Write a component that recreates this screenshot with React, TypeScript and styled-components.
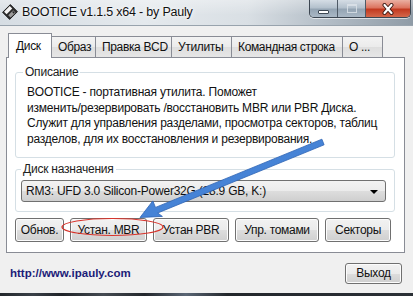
import React from 'react';
import styled, { createGlobalStyle, css } from 'styled-components';

const uiFont = css`
  font-family: "Liberation Sans", Arial, sans-serif;
`;

const uiText = css`
  ${uiFont};
  font-size: 12px;
  letter-spacing: -0.22px;
  color: #111;
  white-space: nowrap;
`;

const Global = createGlobalStyle`
  html, body { margin: 0; padding: 0; background: #f0f0f0; }
  body { font-family: "Liberation Sans", Arial, sans-serif; }
`;

const Window = styled.div`
  ${uiFont};
  position: relative;
  width: 413px;
  height: 296px;
  display: flex;
  flex-direction: column;
  overflow: hidden;
  background: #f0f0f0;
`;

const TitleBar = styled.div`
  height: 25px;
  display: flex;
  align-items: flex-start;
  border-bottom: 1px solid #98a3ad;
  background:
    linear-gradient(to bottom, rgba(255,255,255,0.35), rgba(255,255,255,0) 60%),
    linear-gradient(to right, #d6dde3 0%, #e4e9ed 35%, #d9dfe4 60%, #b5bfc8 78%, #8f9ba6 100%);
`;

const AppIcon = styled.svg`
  width: 16px;
  height: 16px;
  margin: 4px 4px 0 2px;
  flex: none;
`;

const Title = styled.span`
  ${uiFont};
  font-size: 12.5px;
  letter-spacing: -0.2px;
  line-height: 16px;
  margin-top: 4px;
  color: #111;
  text-shadow: 0 0 6px #fff, 0 0 3px #fff;
  white-space: nowrap;
`;

const Spacer = styled.div`
  flex: 1;
`;

const Caption = styled.div`
  display: flex;
  flex: none;
  margin-right: 2px;
  height: 17px;
  border: 1px solid #3c4651;
  border-top: none;
  border-radius: 0 0 5px 5px;
  overflow: hidden;
  box-shadow: 0 1px 0 rgba(255,255,255,0.6);
`;

const CapButton = styled.div<{ $w: number; $kind: 'min' | 'max' | 'close' }>`
  box-sizing: border-box;
  width: ${p => p.$w}px;
  display: flex;
  align-items: center;
  justify-content: center;
  border-left: 1px solid #4f5a66;
  &:first-child { border-left: none; }
  ${p =>
    p.$kind === 'close'
      ? css`
          background: linear-gradient(to bottom, #eab0a2 0%, #dc7560 45%, #c23a20 55%, #d4674a 100%);
        `
      : css`
          background: linear-gradient(to bottom, #d5dde5 0%, #b4c1cd 45%, #94a4b3 55%, #aab8c5 100%);
        `}
`;

const MinGlyph = styled.div`
  width: 9px;
  height: 2px;
  margin-top: 6px;
  background: #fff;
  border: 1px solid #3d4853;
  border-radius: 1px;
`;

const MaxGlyph = styled.div`
  width: 8px;
  height: 6px;
  border: 1px solid #dde4ea;
  border-top-width: 2px;
  opacity: 0.8;
`;

const Client = styled.div`
  flex: 1;
  display: flex;
  flex-direction: column;
  padding: 7px 11px 0 6px;
  background: #f0f0f0;
`;

const TabRow = styled.div`
  display: flex;
  align-items: flex-end;
  height: 24px;
  padding-left: 2px;
  position: relative;
  z-index: 1;
`;

const Tab = styled.div<{ $w: number; $active?: boolean }>`
  ${uiText};
  letter-spacing: -0.35px;
  box-sizing: border-box;
  width: ${p => p.$w}px;
  margin-left: -1px;
  &:first-child { margin-left: 0; }
  border: 1px solid #898c95;
  border-bottom: none;
  ${p =>
    p.$active
      ? css`
          height: 25px;
          margin-bottom: -1px;
          background: #fff;
          padding: 5px 0 0 7px;
          z-index: 2;
        `
      : css`
          height: 21px;
          background: linear-gradient(to bottom, #f3f3f3 0%, #ebebeb 50%, #dedede 51%, #e6e6e6 100%);
          padding: 3px 0 0 6px;
        `}
`;

const Panel = styled.div`
  box-sizing: border-box;
  width: 399px;
  height: 196px;
  border: 1px solid #898c95;
  background: #fff;
  display: flex;
  flex-direction: column;
`;

const Group = styled.fieldset<{ $pad: string; $mt: number }>`
  margin: ${p => p.$mt}px 9px 0 8px;
  padding: ${p => p.$pad};
  border: 1px solid #d5dfe5;
  border-radius: 3px;
  min-width: 0;
`;

const Legend = styled.legend<{ $ml?: number }>`
  ${uiText};
  line-height: 14px;
  padding: 0 2px;
  margin-left: ${p => p.$ml ?? 0}px;
  color: #222;
`;

const Desc = styled.div`
  ${uiText};
  line-height: 15.5px;
`;

const Combo = styled.div`
  ${uiText};
  box-sizing: border-box;
  height: 22px;
  display: flex;
  align-items: center;
  justify-content: space-between;
  padding: 0 7px 0 4px;
  border: 1px solid #707070;
  border-radius: 3px;
  background: linear-gradient(to bottom, #f2f2f2 0%, #ebebeb 50%, #dddddd 51%, #cfcfcf 100%);
`;

const DropArrow = styled.div`
  width: 0;
  height: 0;
  border-left: 4px solid transparent;
  border-right: 4px solid transparent;
  border-top: 4px solid #000;
  margin-top: 2px;
`;

const ButtonRow = styled.div`
  display: flex;
  gap: 6px;
  margin: 6px 0 0 8px;
`;

const Button = styled.div<{ $w: number; $h?: number }>`
  ${uiText};
  letter-spacing: -0.3px;
  box-sizing: border-box;
  width: ${p => p.$w}px;
  height: ${p => p.$h ?? 24}px;
  display: flex;
  align-items: center;
  justify-content: center;
  border: 1px solid #707070;
  border-radius: 3px;
  box-shadow: inset 0 0 0 1px #fcfcfc;
  background: linear-gradient(to bottom, #f2f2f2 0%, #ebebeb 50%, #dddddd 51%, #cfcfcf 100%);
`;

const Footer = styled.div`
  height: 40px;
  display: flex;
  align-items: center;
  justify-content: space-between;
  padding-left: 4px;
`;

const Link = styled.span`
  ${uiFont};
  font-weight: bold;
  font-size: 11.5px;
  color: #1c1c78;
`;

const BottomFrame = styled.div`
  height: 3px;
  background: linear-gradient(to right, #23272c 0%, #3a4048 8%, #1f2328 15%, #454b52 25%, #23272c 35%, #5a6675 45%, #23272c 55%, #2b3036 100%);
`;

const Overlay = styled.svg`
  position: absolute;
  left: 0;
  top: 0;
  width: 413px;
  height: 296px;
  pointer-events: none;
`;

const tabs: [string, number][] = [
  ['Диск', 44],
  ['Образ', 45],
  ['Правка BCD', 77],
  ['Утилиты', 61],
  ['Командная строка', 112],
  ['О ...', 41],
];

const buttons: [string, number][] = [
  ['Обнов.', 49],
  ['Устан. MBR', 77],
  ['Устан PBR', 76],
  ['Упр. томами', 84],
  ['Секторы', 66],
];

export default function App() {
  return (
    <Window>
      <Global />
      <TitleBar>
        <AppIcon viewBox="0 0 16 16">
          <g transform="rotate(-45 8 8)">
            <rect x="2.5" y="3" width="11" height="10" fill="#2b2b2b" stroke="#111" strokeWidth="0.8" />
            <rect x="4" y="3.6" width="8" height="3.6" fill="#f4f4f4" />
            <rect x="4.5" y="9" width="7" height="3.4" fill="#9a9a9a" />
            <rect x="9.5" y="9.5" width="1.4" height="2.4" fill="#222" />
          </g>
        </AppIcon>
        <Title>BOOTICE v1.1.5 x64 - by Pauly</Title>
        <Spacer />
        <Caption>
          <CapButton $w={27} $kind="min">
            <MinGlyph />
          </CapButton>
          <CapButton $w={28} $kind="max">
            <MaxGlyph />
          </CapButton>
          <CapButton $w={45} $kind="close">
            <svg width="14" height="12" viewBox="0 0 14 12">
              <path d="M3.5 2 L10.5 10 M10.5 2 L3.5 10" stroke="#3a1a14" strokeWidth="4" strokeLinecap="round" />
              <path d="M3.5 2 L10.5 10 M10.5 2 L3.5 10" stroke="#fff" strokeWidth="2.2" strokeLinecap="round" />
            </svg>
          </CapButton>
        </Caption>
      </TitleBar>

      <Client>
        <TabRow>
          {tabs.map(([t, w], i) => (
            <Tab key={t} $w={w} $active={i === 0}>
              {t}
            </Tab>
          ))}
        </TabRow>
        <Panel>
          <Group $mt={7} $pad="6px 8px 10px 11px">
            <Legend $ml={-4}>Описание</Legend>
            <Desc>BOOTICE - портативная утилита. Поможет</Desc>
            <Desc>изменить/резервировать /восстановить MBR или PBR Диска.</Desc>
            <Desc>Служит для управления разделами, просмотра секторов, таблиц</Desc>
            <Desc>разделов, для их восстановления и резервирования.</Desc>
          </Group>
          <Group $mt={4} $pad="4px 8px 9px 5px">
            <Legend>Диск назначения</Legend>
            <Combo>
              <span>RM3: UFD 3.0 Silicon-Power32G (28.9 GB, K:)</span>
              <DropArrow />
            </Combo>
          </Group>
          <ButtonRow>
            {buttons.map(([t, w]) => (
              <Button key={t} $w={w}>
                {t}
              </Button>
            ))}
          </ButtonRow>
        </Panel>
        <Footer>
          <Link>http://www.ipauly.com</Link>
          <Button $w={57} $h={21}>Выход</Button>
        </Footer>
      </Client>
      <BottomFrame />

      <Overlay viewBox="0 0 413 296">
        <ellipse cx="112.5" cy="227" rx="50.5" ry="8.5" fill="none" stroke="#d8342c" strokeWidth="1.2" />
        <polygon
          points="324.1,144.8 321.9,139.2 155.5,207.4 152.8,200.9 140,217.5 162.4,216.4 157.7,213"
          fill="#4683d6"
          stroke="#2d63b4"
          strokeWidth="0.8"
          strokeLinejoin="round"
        />
      </Overlay>
    </Window>
  );
}
